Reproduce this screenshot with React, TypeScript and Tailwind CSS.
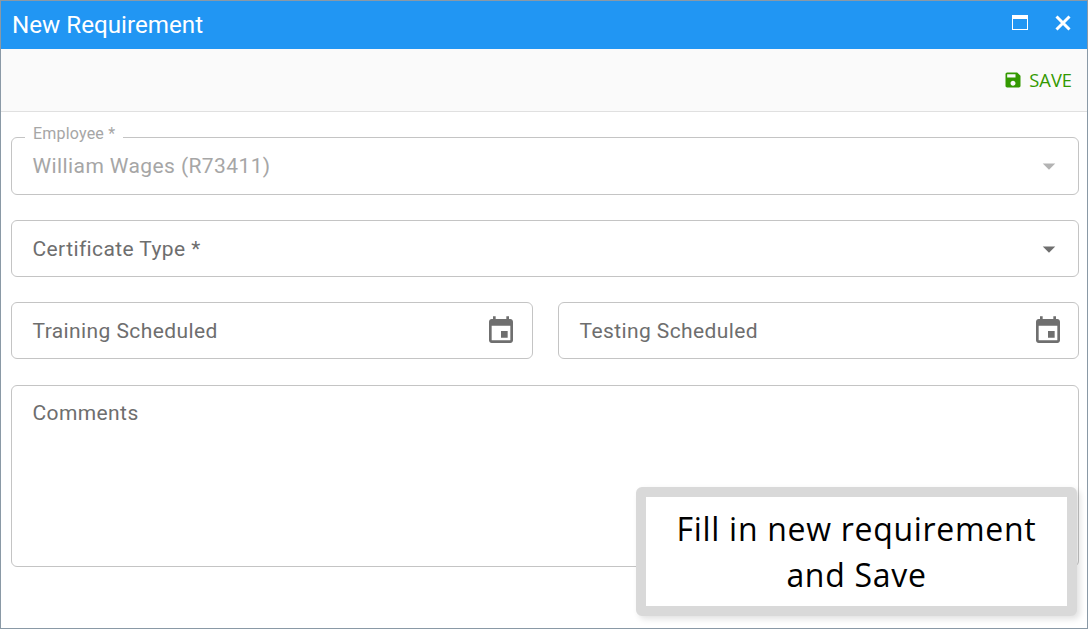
import type { ReactNode } from 'react';

function CaretDown({ className }: { className: string }) {
  return (
    <svg width="30" height="30" viewBox="0 0 24 24" className={className} fill="currentColor">
      <path d="M7 10l5 5 5-5z" />
    </svg>
  );
}

function CalendarIcon() {
  return (
    <svg width="32" height="32" viewBox="0 0 24 24" className="text-[#6f6f6f]" fill="currentColor">
      <path d="M17 12h-5v5h5v-5zM16 1v2H8V1H6v2H5c-1.11 0-1.99.9-1.99 2L3 19c0 1.1.89 2 2 2h14c1.1 0 2-.9 2-2V5c0-1.1-.9-2-2-2h-1V1h-2zm3 18H5V8h14v11z" />
    </svg>
  );
}

function SaveIcon() {
  return (
    <svg width="20" height="20" viewBox="0 0 24 24" fill="currentColor">
      <path d="M17 3H5c-1.11 0-2 .9-2 2v14c0 1.1.89 2 2 2h14c1.1 0 2-.9 2-2V7l-4-4zm-5 16c-1.66 0-3-1.34-3-3s1.34-3 3-3 3 1.34 3 3-1.34 3-3 3zm3-10H5V5h10v4z" />
    </svg>
  );
}

function Field({ label, icon, className }: { label: string; icon?: ReactNode; className: string }) {
  return (
    <div className={`flex items-center justify-between rounded-[6px] border border-[#c4c4c4] pl-[20.5px] text-[21px] tracking-[0.4px] text-[#6e6e6e] ${className}`}>
      <span className="pt-[2px]">{label}</span>
      {icon}
    </div>
  );
}

export default function App() {
  return (
    <div className="relative h-[629px] w-[1088px] overflow-hidden border border-[#8a99a6] bg-white font-['Roboto',sans-serif]">
      <div className="flex h-[48px] items-center justify-between bg-[#2196f3] pl-[11px] pr-[15px] text-white">
        <span className="text-[24.2px] font-normal">New Requirement</span>
        <div className="flex items-center gap-[26px] pb-[5px]">
          <svg width="16" height="15" viewBox="0 0 16 15" fill="none" stroke="currentColor">
            <rect x="0.5" y="0.5" width="15" height="14" strokeWidth="1" />
            <path d="M0 2.5h16" strokeWidth="3" />
          </svg>
          <svg width="18" height="18" viewBox="0 0 18 18" fill="none" stroke="currentColor" strokeWidth="3">
            <path d="M2.5 2.5l13 13M15.5 2.5l-13 13" />
          </svg>
        </div>
      </div>

      <div className="flex h-[63px] items-center justify-end border-b border-[#e0e0e0] bg-[#fafafa] pr-[15px] text-[#339900]">
        <div className="flex items-center gap-[6px] font-['Open_Sans',sans-serif] text-[18.3px]">
          <SaveIcon />
          <span>SAVE</span>
        </div>
      </div>

      <div className="flex flex-col gap-[25px] pl-[10px] pr-[8px] pt-[25px]">
        <div className="relative flex h-[58px] items-center justify-between rounded-[6px] border border-[#c4c4c4] pl-[20.5px] pr-[14px] text-[21px] tracking-[0.4px] text-[#a6a6a6]">
          <span className="absolute -top-[16px] left-[13px] bg-white px-[8px] text-[16px] tracking-[0.2px]">Employee *</span>
          <span className="pt-[1px]">William Wages (R73411)</span>
          <CaretDown className="text-[#b3b3b3]" />
        </div>

        <Field
          label="Certificate Type *"
          className="h-[57px] pr-[14px]"
          icon={<CaretDown className="text-[#6f6f6f]" />}
        />

        <div className="flex gap-[25px]">
          <Field label="Training Scheduled" className="h-[57px] w-[522px] pr-[15px]" icon={<CalendarIcon />} />
          <Field label="Testing Scheduled" className="h-[57px] w-[521px] pr-[14px]" icon={<CalendarIcon />} />
        </div>

        <div className="mt-[1px] h-[182px] rounded-[6px] border border-[#c4c4c4] pl-[20.5px] pt-[12px] text-[21px] tracking-[0.4px] text-[#6e6e6e]">
          Comments
        </div>
      </div>

      <div className="absolute left-[635px] top-[486px] flex h-[129px] w-[441px] items-center justify-center rounded-[6px] border-[10px] border-[#d9d9d9] bg-white text-center font-['Open_Sans',sans-serif] text-[32px] leading-[46px] tracking-[0.7px] text-black shadow-[3px_3px_6px_rgba(0,0,0,0.12)]">
        <span>Fill in new requirement<br />and Save</span>
      </div>
    </div>
  );
}
